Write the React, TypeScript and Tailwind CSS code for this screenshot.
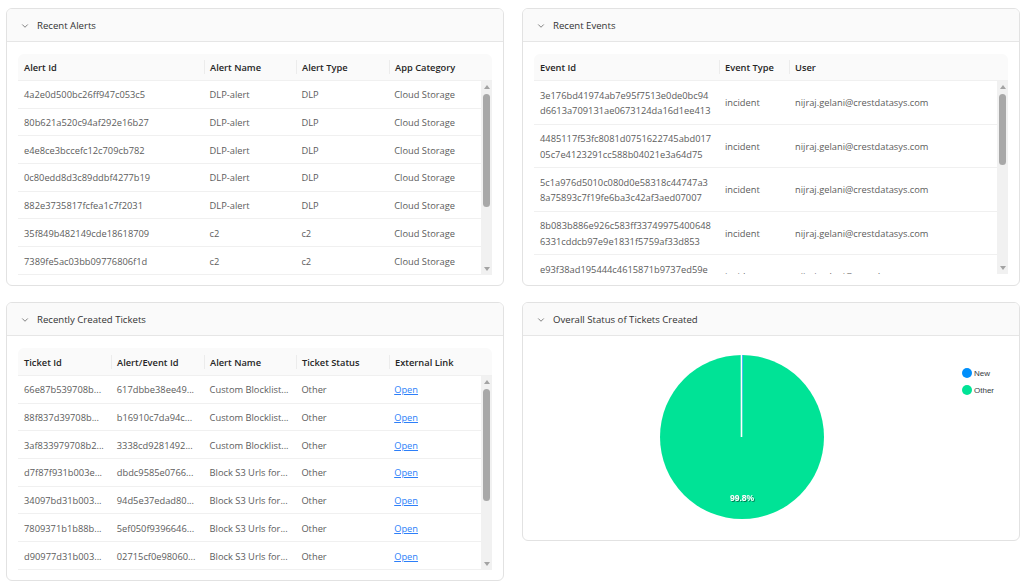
import { ChevronDown } from "lucide-react";
import React from "react";

const alerts = [
    ["4a2e0d500bc26ff947c053c5", "DLP-alert", "DLP", "Cloud Storage"],
    ["80b621a520c94af292e16b27", "DLP-alert", "DLP", "Cloud Storage"],
    ["e4e8ce3bccefc12c709cb782", "DLP-alert", "DLP", "Cloud Storage"],
    ["0c80edd8d3c89ddbf4277b19", "DLP-alert", "DLP", "Cloud Storage"],
    ["882e3735817fcfea1c7f2031", "DLP-alert", "DLP", "Cloud Storage"],
    ["35f849b482149cde18618709", "c2", "c2", "Cloud Storage"],
    ["7389fe5ac03bb09776806f1d", "c2", "c2", "Cloud Storage"]
];

const events = [
    ["3e176bd41974ab7e95f7513e0de0bc94", "d6613a709131ae0673124da16d1ee413"],
    ["4485117f53fc8081d0751622745abd017", "05c7e4123291cc588b04021e3a64d75"],
    ["5c1a976d5010c080d0e58318c44747a3", "8a75893c7f19fe6ba3c42af3aed07007"],
    ["8b083b886e926c583ff33749975400648", "6331cddcb97e9e1831f5759af33d853"],
    ["e93f38ad195444c4615871b9737ed59e", "2a41c07d9e8b35f6104d2c7ab8e91f03"]
];

// already truncated the way the table shows them
const tickets = [
    ["66e87b539708b...", "617dbbe38ee49...", "Custom Blocklist..."],
    ["88f837d39708b...", "b16910c7da94c...", "Custom Blocklist..."],
    ["3af833979708b2...", "3338cd9281492...", "Custom Blocklist..."],
    ["d7f87f931b003e...", "dbdc9585e0766...", "Block S3 Urls for..."],
    ["34097bd31b003...", "94d5e37edad80...", "Block S3 Urls for..."],
    ["7809371b1b88b...", "5ef050f9396646...", "Block S3 Urls for..."],
    ["d90977d31b003...", "02715cf0e98060...", "Block S3 Urls for..."]
];

const font = { fontFamily: '"Open Sans", "Noto Sans", sans-serif' };

function Card({
    title,
    className,
    children
}: {
    title: string;
    className: string;
    children: React.ReactNode;
}) {
    return (
        <div className={`flex flex-col overflow-hidden rounded-[6px] border border-[#e2e2e2] bg-white ${className}`}>
            <div className="flex h-[33px] shrink-0 items-center gap-[7px] border-b border-[#e6e6e6] bg-[#fafafa] pl-[13px] pt-[2px]">
                <ChevronDown className="h-[10px] w-[10px] text-[#444]" strokeWidth={1.6} />
                <span className="text-[9.6px] text-[#333]">{title}</span>
            </div>
            {children}
        </div>
    );
}

// fake vertical scrollbar, thumb size given in px
function ScrollBar({ thumb }: { thumb: number }) {
    return (
        <div className="flex w-[11px] shrink-0 flex-col items-center bg-[#f1f1f1] pt-[4px] pb-[4px]">
            <div className="h-0 w-0 border-x-[3.5px] border-b-[4px] border-x-transparent border-b-[#a3a3a3]" />
            <div className="mt-[5px] w-[7px] rounded-full bg-[#a8a8a8]" style={{ height: thumb }} />
            <div className="flex-1" />
            <div className="h-0 w-0 border-x-[3.5px] border-t-[4px] border-x-transparent border-t-[#a3a3a3]" />
        </div>
    );
}

function HeadCell({ label, first, width }: { label: string; first?: boolean; width: number }) {
    return (
        <div
            className={`relative flex items-center px-[6px] pt-[2px] font-semibold text-[#262626] ${
                first
                    ? ""
                    : "before:absolute before:left-0 before:top-1/2 before:h-[14px] before:w-px before:-translate-y-1/2 before:bg-[#ececec]"
            }`}
            style={{ width }}
        >
            {label}
        </div>
    );
}

function AlertsCard() {
    const widths = [186, 92, 93, 93];
    return (
        <Card title="Recent Alerts" className="h-[278px]">
            <div className="px-[11px] pt-[12px]">
                <div className="flex h-[27px] rounded-t-[6px] border-b border-[#f0f0f0] bg-[#fafafa] text-[9.3px]">
                    {["Alert Id", "Alert Name", "Alert Type", "App Category"].map((h, i) => (
                        <HeadCell key={h} label={h} first={i === 0} width={widths[i]} />
                    ))}
                </div>
                <div className="flex h-[194px]">
                    <div className="flex-1 overflow-hidden">
                        {alerts.map((r) => (
                            <div key={r[0]} className="flex h-[27.7px] items-center border-b border-[#f0f0f0] pt-[2px] text-[9.3px] text-[#5c5c5c]">
                                {r.map((c, i) => (
                                    <div key={i} className="truncate px-[6px]" style={{ width: widths[i] }}>
                                        {c}
                                    </div>
                                ))}
                            </div>
                        ))}
                    </div>
                    <ScrollBar thumb={113} />
                </div>
            </div>
        </Card>
    );
}

function EventsCard() {
    const widths = [185, 70, 208];
    return (
        <Card title="Recent Events" className="h-[278px]">
            <div className="px-[11px] pt-[12px]">
                <div className="flex h-[27px] rounded-t-[6px] border-b border-[#f0f0f0] bg-[#fafafa] text-[9.3px]">
                    {["Event Id", "Event Type", "User"].map((h, i) => (
                        <HeadCell key={h} label={h} first={i === 0} width={widths[i]} />
                    ))}
                </div>
                <div className="flex h-[193px]">
                    <div className="flex-1 overflow-hidden">
                        {events.map((r) => (
                            <div key={r[0]} className="flex h-[43.5px] shrink-0 items-center border-b border-[#f0f0f0] pt-[2px] text-[9.3px] leading-[15.6px] text-[#5c5c5c]">
                                <div className="px-[6px]" style={{ width: widths[0] }}>
                                    <div className="whitespace-nowrap">{r[0]}</div>
                                    <div className="whitespace-nowrap">{r[1]}</div>
                                </div>
                                <div className="px-[6px]" style={{ width: widths[1] }}>
                                    incident
                                </div>
                                <div className="px-[6px]" style={{ width: widths[2] }}>
                                    nijraj.gelani@crestdatasys.com
                                </div>
                            </div>
                        ))}
                    </div>
                    <ScrollBar thumb={71} />
                </div>
            </div>
        </Card>
    );
}

function TicketsCard() {
    const widths = [93, 93, 92, 93, 93];
    return (
        <Card title="Recently Created Tickets" className="h-[279px]">
            <div className="px-[11px] pt-[12px]">
                <div className="flex h-[28px] rounded-t-[6px] border-b border-[#f0f0f0] bg-[#fafafa] text-[9.3px]">
                    {["Ticket Id", "Alert/Event Id", "Alert Name", "Ticket Status", "External Link"].map((h, i) => (
                        <HeadCell key={h} label={h} first={i === 0} width={widths[i]} />
                    ))}
                </div>
                <div className="flex h-[194px]">
                    <div className="flex-1 overflow-hidden">
                        {tickets.map((r) => (
                            <div key={r[0]} className="flex h-[27.7px] items-center border-b border-[#f0f0f0] pt-[2px] text-[9.3px] text-[#5c5c5c]">
                                {r.map((c, i) => (
                                    <div key={i} className="whitespace-nowrap px-[6px]" style={{ width: widths[i] }}>
                                        {c}
                                    </div>
                                ))}
                                <div className="px-[6px]" style={{ width: widths[3] }}>
                                    Other
                                </div>
                                <div className="px-[6px]" style={{ width: widths[4] }}>
                                    <a href="#" className="text-[#2d7ff9] underline">
                                        Open
                                    </a>
                                </div>
                            </div>
                        ))}
                    </div>
                    <ScrollBar thumb={112} />
                </div>
            </div>
        </Card>
    );
}

function StatusCard() {
    const cx = 219;
    const cy = 101;
    const r = 82;
    return (
        <Card title="Overall Status of Tickets Created" className="h-[239px]">
            <svg width="496" height="203" viewBox="0 0 496 203" className="block">
                <defs>
                    <filter id="lblShadow" x="-20%" y="-50%" width="140%" height="200%">
                        <feDropShadow dx="1" dy="1" stdDeviation="0.6" floodColor="#000" floodOpacity="0.45" />
                    </filter>
                </defs>
                <circle cx={cx} cy={cy} r={r} fill="#00E396" />
                <path
                    d={`M ${cx} ${cy} L ${cx} ${cy - r} A ${r} ${r} 0 0 1 ${cx + r * Math.sin(0.0126)} ${cy - r * Math.cos(0.0126)} Z`}
                    fill="#008FFB"
                />
                <line x1={cx - 0.5} y1={cy - r} x2={cx - 0.5} y2={cy} stroke="#fff" strokeWidth="1.6" />
                <text
                    x={cx}
                    y={cy + 64}
                    textAnchor="middle"
                    fill="#fff"
                    fontSize="8.5"
                    fontWeight="bold"
                    fontFamily='"Liberation Sans", Arial, sans-serif'
                    filter="url(#lblShadow)"
                >
                    99.8%
                </text>
                <circle cx={444} cy={37} r={5} fill="#008FFB" />
                <text x={451} y={40} fontSize="8" fill="#373d3f" fontFamily='"Liberation Sans", Arial, sans-serif'>
                    New
                </text>
                <circle cx={444} cy={54} r={5} fill="#00E396" />
                <text x={451} y={57} fontSize="8" fill="#373d3f" fontFamily='"Liberation Sans", Arial, sans-serif'>
                    Other
                </text>
            </svg>
        </Card>
    );
}

export default function App() {
    return (
        <div className="min-h-[587px] w-[1024px] bg-white" style={font}>
            <div className="grid grid-cols-[498px_498px] items-start gap-x-[18px] gap-y-[16px] pl-[6px] pt-[8px]">
                <AlertsCard />
                <EventsCard />
                <TicketsCard />
                <StatusCard />
            </div>
        </div>
    );
}
